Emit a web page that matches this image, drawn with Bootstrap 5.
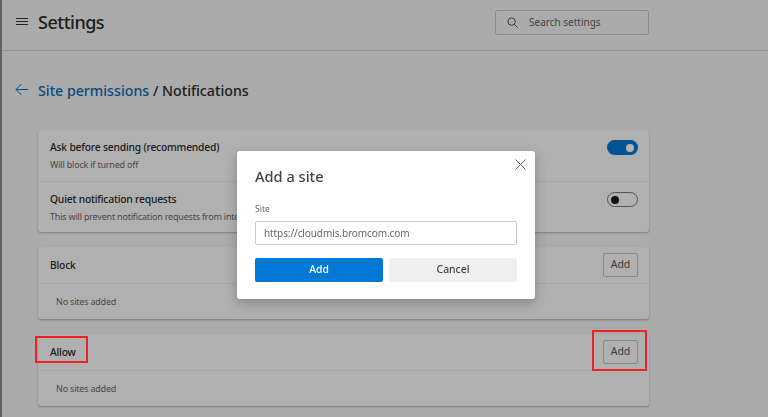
<!DOCTYPE html>
<html lang="en">
<head>
<meta charset="utf-8">
<title>Settings</title>
<link href="https://cdn.jsdelivr.net/npm/bootstrap@5.3.0/dist/css/bootstrap.min.css" rel="stylesheet">
<style>
html,body{height:417px;overflow:hidden}
body{background:#f5f5f5;font-family:"Noto Sans","Open Sans",sans-serif;color:#262626;border-left:2px solid #8f8f8f;font-size:11px}
.top-bar{height:51px;border-bottom:1px solid #d4d4d4;padding:0 119px 6px 13px}
.burger{width:14px;height:14px;margin-right:9px;flex:none}
.app-title{font-size:18px;font-weight:500;line-height:26px;margin:0;letter-spacing:-.5px;color:#2b2b2b}
.search-field{width:154px;height:25px;border:1px solid #c9c9c9;border-radius:2px;padding-left:11px;color:#666;font-size:10px;gap:11px}
.crumbs{padding:29px 0 0 13px;height:79px;font-size:14.2px;font-weight:500;line-height:22px;color:#2b2b2b}
.crumbs a{color:#0a6cb8;text-decoration:none}
.crumbs svg{margin-right:9px;flex:none}
.panel-stack{margin-left:36px;width:611px;gap:15px}
.s-panel{background:#fcfcfc;border-radius:3px;box-shadow:0 1px 2px rgba(0,0,0,.28)}
.s-row{padding:0 11px 0 12px;position:relative}
.s-row+.s-row{border-top:1px solid #ededed}
.row-a{height:51px;padding-top:10px}
.row-b{height:36px}
.s-name{font-weight:500;font-size:10.3px;line-height:15px;color:#2b2b2b;letter-spacing:-.2px}
.s-sub{font-size:9px;line-height:13px;color:#6b6b6b;margin-top:3px;letter-spacing:-.2px;white-space:nowrap}
.empty-row{height:36px;padding-left:18px;color:#6b6b6b;font-size:9px;letter-spacing:-.2px}
.tog{width:31px;height:15px;border-radius:8px;flex:none;display:flex;align-items:center;padding:0 4px}
.tog i{width:8px;height:8px;border-radius:50%;display:block}
.tog-on{background:#0078d4;justify-content:flex-end}
.tog-on i{background:#fff}
.tog-off{border:1px solid #777;padding:0 3px}
.tog-off i{background:#1a1a1a}
.add-small{width:35px;height:24px;padding:0;border:1px solid #c4c4c4;border-radius:2px;background:#fcfcfc;font-size:10.5px;color:#555;--bs-btn-hover-bg:#fcfcfc}
.modal-backdrop{--bs-backdrop-opacity:.3}
.mark-box{position:absolute;border:2px solid #ee2222;z-index:1060;pointer-events:none}
.mark-allow{left:-3px;top:2px;width:53px;height:27px}
.mark-add{right:2px;top:-4px;width:55px;height:41px}
.site-dlg{position:absolute;left:237px;top:151px;width:298px;height:148px;z-index:1055;background:#fff;border-radius:3px;box-shadow:0 4px 12px rgba(0,0,0,.25);padding:15px 18px 0}
.dlg-title{font-size:14.6px;font-weight:500;line-height:20px;margin:0 0 17px;color:#444}
.dlg-label{display:block;font-size:8.6px;line-height:12px;color:#666;margin:0 0 6px}
.dlg-input{height:24px;border:1px solid #c8c8c8;border-radius:2px;padding:0 8px;font-size:10px;letter-spacing:-.1px;color:#666;font-family:inherit;box-shadow:none}
.dlg-actions{gap:6px;margin-top:13px}
.dlg-btn{flex:1 1 0;height:24px;padding:0;border:0;border-radius:2px;font-size:10.4px;font-weight:500}
.dlg-primary{--bs-btn-bg:#0078d4;--bs-btn-color:#fff;background:#0078d4;color:#fff}
.dlg-second{background:#efefef;color:#444}
.dlg-x{position:absolute;right:9px;top:8px;padding:0;border:0;background:none;line-height:0}
</style>
</head>
<body>
<header class="top-bar d-flex align-items-center justify-content-between">
  <div class="d-flex align-items-center">
    <svg class="burger" viewBox="0 0 14 14" fill="none" stroke="#333" stroke-width="1"><path d="M1 3.5h12M1 6.5h12M1 9.5h12"/></svg>
    <h1 class="app-title">Settings</h1>
  </div>
  <div class="search-field d-flex align-items-center">
    <svg width="11" height="11" viewBox="0 0 12 12" fill="none" stroke="#444" stroke-width="1"><circle cx="5" cy="5" r="4"/><path d="M8 8l3.5 3.5"/></svg>
    <span>Search settings</span>
  </div>
</header>
<div class="crumbs d-flex align-items-start">
  <svg width="14" height="22" viewBox="0 0 14 22" fill="none" stroke="#0a6cb8" stroke-width="1"><path d="M1 9.5h12M6.5 4L1 9.5 6.5 15"/></svg>
  <span><a href="#">Site permissions</a> / Notifications</span>
</div>
<main class="panel-stack d-flex flex-column">
  <section class="s-panel">
    <div class="s-row row-a d-flex align-items-start justify-content-between">
      <div><div class="s-name">Ask before sending (recommended)</div><div class="s-sub">Will block if turned off</div></div>
      <span class="tog tog-on"><i></i></span>
    </div>
    <div class="s-row row-a d-flex align-items-start justify-content-between">
      <div><div class="s-name">Quiet notification requests</div><div class="s-sub">This will prevent notification requests from inte</div></div>
      <span class="tog tog-off"><i></i></span>
    </div>
  </section>
  <section class="s-panel">
    <div class="s-row row-b d-flex align-items-center justify-content-between">
      <div class="s-name">Block</div><button class="btn add-small" type="button">Add</button>
    </div>
    <div class="s-row empty-row d-flex align-items-center">No sites added</div>
  </section>
  <section class="s-panel">
    <div class="s-row row-b d-flex align-items-center justify-content-between">
      <div class="s-name">Allow</div><button class="btn add-small" type="button">Add</button>
      <span class="mark-box mark-allow"></span><span class="mark-box mark-add"></span>
    </div>
    <div class="s-row empty-row d-flex align-items-center">No sites added</div>
  </section>
</main>
<div class="modal-backdrop show"></div>
<div class="site-dlg" role="dialog">
  <button class="dlg-x" type="button" aria-label="Close"><svg width="11" height="11" viewBox="0 0 11 11" fill="none" stroke="#666" stroke-width="1"><path d="M.5.5l10 10M10.5.5l-10 10"/></svg></button>
  <h2 class="dlg-title">Add a site</h2>
  <label class="dlg-label" for="site">Site</label>
  <input id="site" class="form-control dlg-input" value="https://cloudmis.bromcom.com">
  <div class="dlg-actions d-flex">
    <button class="btn dlg-btn dlg-primary" type="button">Add</button>
    <button class="btn dlg-btn dlg-second" type="button">Cancel</button>
  </div>
</div>
<script src="https://cdn.jsdelivr.net/npm/bootstrap@5.3.0/dist/js/bootstrap.bundle.min.js"></script>
</body>
</html>
